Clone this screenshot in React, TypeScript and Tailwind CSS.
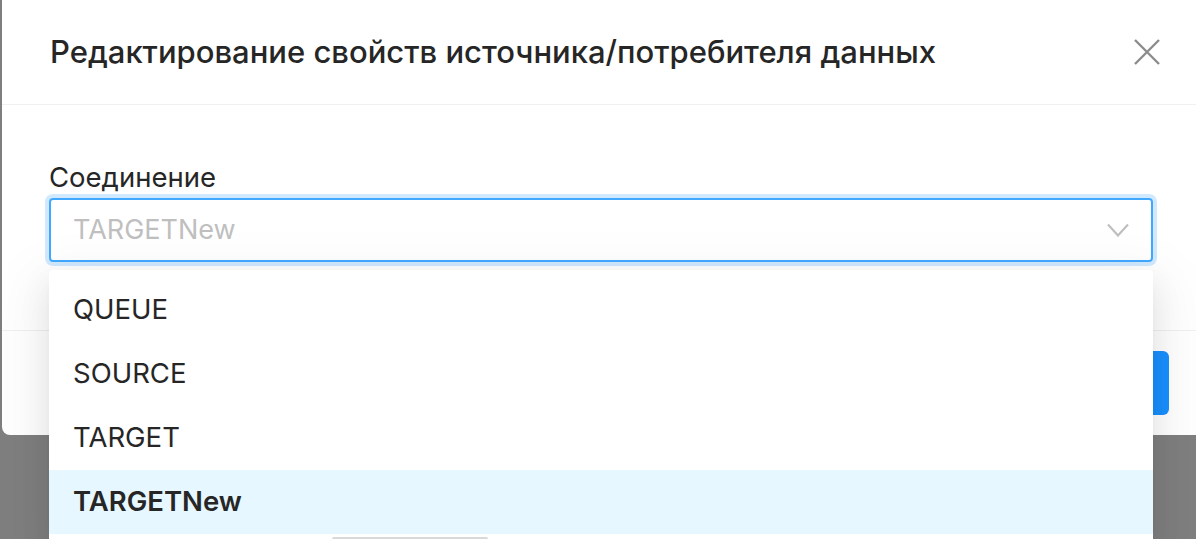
import { useState } from "react";

const options = ["QUEUE", "SOURCE", "TARGET", "TARGETNew"];

function CloseIcon() {
  return (
    <svg width="26" height="26" viewBox="0 0 26 26" fill="none">
      <path d="M1 1L25 25M25 1L1 25" stroke="#8c8c8c" strokeWidth="2.4" />
    </svg>
  );
}

function ChevronDown() {
  return (
    <svg width="22" height="14" viewBox="0 0 22 14" fill="none">
      <path d="M1 1.5L11 12.5L21 1.5" stroke="#bfbfbf" strokeWidth="2.2" />
    </svg>
  );
}

export default function App() {
  const [value] = useState("TARGETNew");

  return (
    <div
      className="h-[539px] w-[1196px] overflow-hidden bg-[#7f7f7f]"
      style={{ fontFamily: "Inter, 'Noto Sans', 'Liberation Sans', sans-serif" }}
    >
      <div className="ml-[2px] w-[1198px] rounded-bl-[8px] bg-white">
        <header className="flex h-[105px] items-center justify-between border-b border-[#f0f0f0] pl-[48px] pr-[40px]">
          <h2 className="text-[31px] font-medium leading-[44px] text-[#262626]">
            Редактирование свойств источника/потребителя данных
          </h2>
          <button className="flex h-[26px] w-[26px] items-center justify-center">
            <CloseIcon />
          </button>
        </header>

        <div className="px-[47px] pb-[68px] pt-[50px]">
          <label className="block h-[43px] text-[27.5px] leading-[44px] text-[#262626]">
            Соединение
          </label>
          <div className="relative z-10">
            <div className="flex h-[64px] items-center justify-between rounded-[4px] border-2 border-[#40a9ff] pl-[22px] pr-[22px] shadow-[0_0_0_4px_rgba(24,144,255,0.2)]">
              <span className="text-[27px] leading-[44px] text-[#bfbfbf]">{value}</span>
              <ChevronDown />
            </div>

            <ul className="absolute left-0 top-[72px] w-full rounded-[4px] bg-white py-[8px] shadow-[0_6px_12px_-8px_rgba(0,0,0,0.12),0_12px_32px_0_rgba(0,0,0,0.08),0_18px_56px_16px_rgba(0,0,0,0.05)]">
              {options.map((opt) => (
                <li
                  key={opt}
                  className={
                    opt === value
                      ? "flex h-[64px] items-center bg-[#e6f7ff] px-[24px] text-[27.5px] font-semibold text-[#262626]"
                      : "flex h-[64px] items-center px-[24px] text-[27.5px] text-[#262626]"
                  }
                >
                  {opt}
                </li>
              ))}
              <li className="ml-[283px] mt-[3px] h-[4px] w-[156px] rounded-full bg-[#d9d9d9]" />
            </ul>
          </div>
        </div>

        <footer className="flex h-[105px] items-center justify-end border-t border-[#f0f0f0] pr-[31px]">
          <button className="h-[64px] w-[150px] rounded-[6px] bg-[#1890ff] text-[28px] text-white">
            OK
          </button>
        </footer>
      </div>
    </div>
  );
}
